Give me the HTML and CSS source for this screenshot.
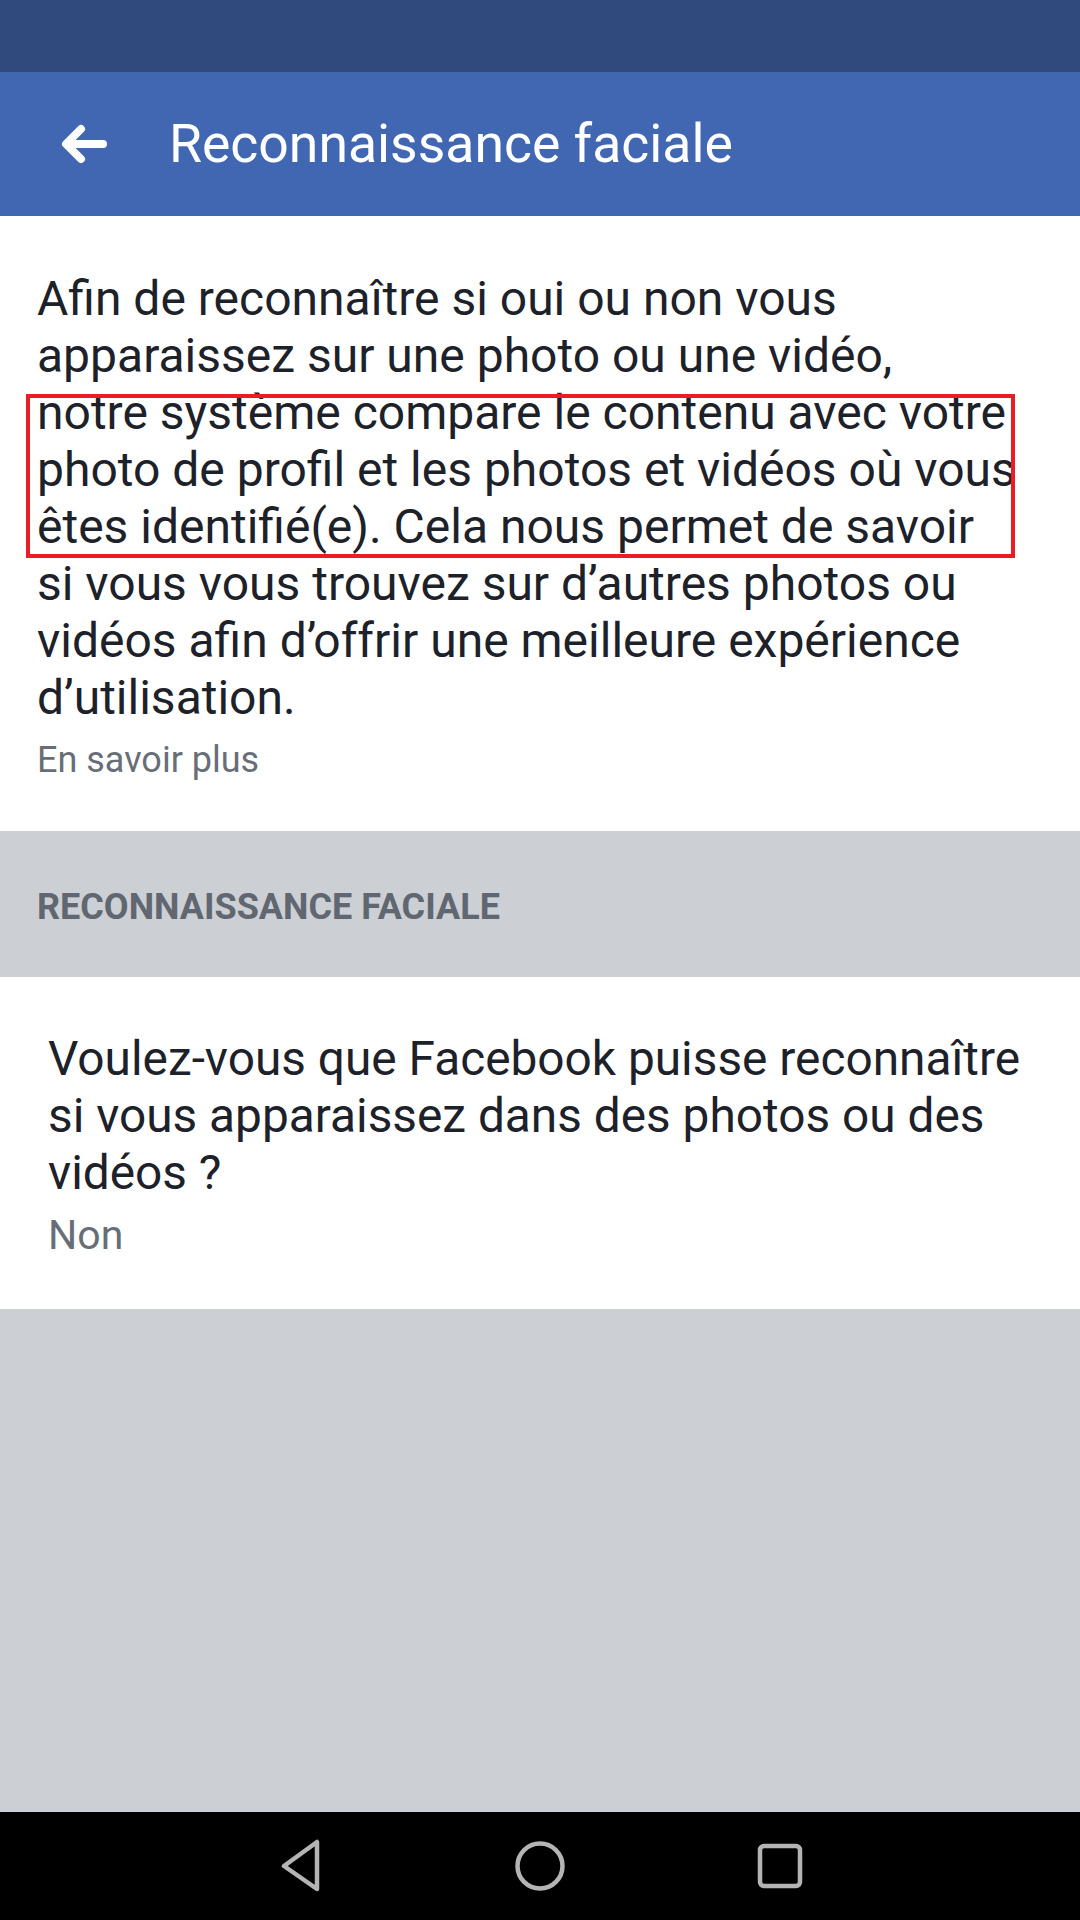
FILE: index.html
```html
<!DOCTYPE html>
<html lang="fr">
<head>
<meta charset="utf-8">
<title>Reconnaissance faciale</title>
<link rel="stylesheet" href="styles.css">
</head>
<body>
<div class="screen">
  <div class="status-bar"></div>
  <header class="app-bar">
    <span class="back">
      <svg width="48" height="40" viewBox="0 0 48 40"><path d="M43 20 H7 M21 5 L6 20 L21 35" fill="none" stroke="#fff" stroke-width="8" stroke-linecap="round" stroke-linejoin="round"/></svg>
    </span>
    <h1 class="title">Reconnaissance faciale</h1>
  </header>

  <section class="intro">
    <p class="intro-text">Afin de reconnaître si oui ou non vous<br>apparaissez sur une photo ou une vidéo,<br>notre système compare le contenu avec votre<br>photo de profil et les photos et vidéos où vous<br>êtes identifié(e). Cela nous permet de savoir<br>si vous vous trouvez sur d’autres photos ou<br>vidéos afin d’offrir une meilleure expérience<br>d’utilisation.<span class="highlight"></span></p>
    <a class="more">En savoir plus</a>
  </section>

  <div class="section-header">RECONNAISSANCE FACIALE</div>

  <section class="setting">
    <p class="question">Voulez-vous que Facebook puisse reconnaître<br>si vous apparaissez dans des photos ou des<br>vidéos ?</p>
    <p class="value">Non</p>
  </section>

  <div class="filler"></div>

  <nav class="nav-bar">
    <span class="nav-btn">
      <svg width="48" height="54" viewBox="0 0 48 54"><path d="M41 3 L41 50 L8 27 Z" fill="none" stroke="#b4b4b4" stroke-width="4.5" stroke-linejoin="round"/></svg>
    </span>
    <span class="nav-btn">
      <svg width="52" height="52" viewBox="0 0 52 52"><circle cx="26" cy="26" r="22.5" fill="none" stroke="#b4b4b4" stroke-width="4.5"/></svg>
    </span>
    <span class="nav-btn">
      <svg width="48" height="48" viewBox="0 0 48 48"><rect x="4" y="4" width="40" height="40" rx="4" fill="none" stroke="#b4b4b4" stroke-width="4.5"/></svg>
    </span>
  </nav>
</div>
</body>
</html>
```

FILE: styles.css
```css
* { box-sizing: border-box; }

html, body {
  margin: 0;
  padding: 0;
}

body {
  font-family: Roboto, "Noto Sans", "Liberation Sans", sans-serif;
  background: #ffffff;
}

.screen {
  width: 1080px;
  height: 1920px;
  display: flex;
  flex-direction: column;
  overflow: hidden;
}

.status-bar {
  height: 72px;
  background: #314a7e;
  flex: none;
}

.app-bar {
  height: 144px;
  background: #4267b2;
  display: flex;
  align-items: center;
  padding-left: 60px;
  flex: none;
}

.back {
  width: 48px;
  height: 40px;
  display: flex;
}

.title {
  margin: 0 0 0 61px;
  font-size: 53.5px;
  font-weight: 400;
  color: #ffffff;
  line-height: 1;
}

.intro {
  padding: 54px 37px 50px 37px;
  background: #ffffff;
  flex: none;
}

.intro-text {
  position: relative;
  margin: 0;
  font-size: 48px;
  line-height: 57px;
  color: #1d2129;
}

.highlight {
  position: absolute;
  left: -11px;
  top: 124px;
  width: 989px;
  height: 164px;
  border: 4px solid #ec1c24;
}

.more {
  display: block;
  margin-top: 13px;
  font-size: 36px;
  line-height: 42px;
  color: #686e77;
}

.section-header {
  flex: none;
  height: 146px;
  background: #cccfd4;
  padding: 55px 37px 0 37px;
  font-size: 36px;
  line-height: 42px;
  font-weight: 700;
  color: #606770;
}

.setting {
  flex: none;
  background: #ffffff;
  padding: 54px 49px 50px 48px;
}

.question {
  margin: 0;
  font-size: 47.8px;
  line-height: 57px;
  color: #1d2129;
}

.value {
  margin: 9px 0 0 0;
  font-size: 41px;
  line-height: 48px;
  color: #686e77;
}

.filler {
  flex: 1;
  background: #cccfd4;
}

.nav-bar {
  flex: none;
  height: 108px;
  background: #000000;
  display: flex;
  align-items: center;
  justify-content: center;
  gap: 188px;
}

.nav-btn {
  width: 52px;
  height: 54px;
  display: flex;
  align-items: center;
  justify-content: center;
}
```
